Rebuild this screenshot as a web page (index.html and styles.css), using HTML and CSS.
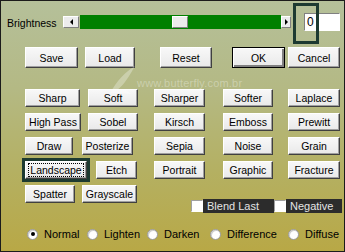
FILE: index.html
```html
<!DOCTYPE html>
<html lang="en">
<head>
	<meta charset="UTF-8">
	<title>Brightness</title>
	<link rel="stylesheet" href="styles.css">
</head>
<body>
	<div class="panel">
		<div class="bright_row">
			<span class="bright_label">Brightness</span>
			<div class="slider">
				<span class="arrow arrow_left"></span>
				<div class="track"><span class="fill_a"></span><span class="thumb"></span></div>
				<span class="arrow arrow_right"></span>
			</div>
			<div class="value_wrap">
				<input class="value" type="text" value="0">
				<span class="focus_box"></span>
			</div>
		</div>

		<div class="action_row">
			<button class="btn b_save">Save</button>
			<button class="btn b_load">Load</button>
			<button class="btn b_reset">Reset</button>
			<button class="btn b_ok">OK</button>
			<button class="btn b_cancel">Cancel</button>
		</div>

		<div class="watermark">
			<svg width="30" height="32" viewBox="0 0 30 32"><path d="M2 30 C8 22 12 12 28 2 C22 12 18 20 10 26 C16 24 20 26 24 30 C16 30 8 28 2 30 Z" fill="rgba(255,255,255,0.3)"/></svg>
			<span>www.butterfly.com.br</span>
		</div>

		<div class="filters">
			<div class="frow">
				<div class="pair"><button class="btn w55">Sharp</button><button class="btn w50 g8">Soft</button></div>
				<button class="btn c3">Sharper</button><button class="btn c4">Softer</button><button class="btn c5">Laplace</button>
			</div>
			<div class="frow">
				<div class="pair"><button class="btn w56">High Pass</button><button class="btn w50 g7">Sobel</button></div>
				<button class="btn c3">Kirsch</button><button class="btn c4">Emboss</button><button class="btn c5">Prewitt</button>
			</div>
			<div class="frow">
				<div class="pair"><button class="btn w48">Draw</button><button class="btn w51 g9">Posterize</button></div>
				<button class="btn c3">Sepia</button><button class="btn c4">Noise</button><button class="btn c5">Grain</button>
			</div>
			<div class="frow">
				<div class="pair"><button class="btn w62 focused"><span class="dots">Landscape</span></button><button class="btn w41 g9">Etch</button></div>
				<button class="btn c3">Portrait</button><button class="btn c4">Graphic</button><button class="btn c5">Fracture</button>
			</div>
			<div class="frow last_row">
				<div class="pair"><button class="btn w50">Spatter</button><button class="btn w55 g7">Grayscale</button></div>
				<div class="checks">
					<span class="check_box"></span><span class="check_label cl_blend">Blend Last</span>
					<span class="check_box"></span><span class="check_label cl_neg">Negative</span>
				</div>
			</div>
		</div>

		<div class="radio_row">
			<label class="opt"><span class="radio checked"></span>Normal</label>
			<label class="opt"><span class="radio"></span>Lighten</label>
			<label class="opt"><span class="radio"></span>Darken</label>
			<label class="opt"><span class="radio"></span>Difference</label>
			<label class="opt"><span class="radio"></span>Diffuse</label>
		</div>
	</div>
</body>
</html>
```

FILE: styles.css
```css
*{box-sizing: border-box;}
html,body{margin:0;}
body{width:345px;height:252px;overflow:hidden;font-family:"Liberation Sans",Arial,sans-serif;font-size:10.5px;color:#000;}
.panel{position:relative;height:252px;border:1px solid #1b1b1b;background:linear-gradient(#b5c09a 0%,#b4b984 35%,#b4b062 68%,#b8a846 100%);}

/* brightness slider */
.bright_row{display:flex;align-items:flex-start;height:41px;margin-top:2px;}
.bright_label{width:56px;margin:14px 0 0 6px;line-height:12px;}
.slider{display:flex;align-items:center;height:14px;margin-top:12px;}
.arrow{display:flex;align-items:center;justify-content:center;height:12px;background:#ececec;border:1px solid;border-color:#fff #808080 #808080 #fff;}
.arrow_left{width:16px;margin-right:1px;}
.arrow_right{width:10px;}
.arrow::before{content:"";border:3px solid transparent;}
.arrow_left::before{border-right-color:#000;border-left-width:0;}
.arrow_right::before{border-left-color:#000;border-right-width:0;}
.track{display:flex;align-items:center;width:201px;height:14px;background:#008000;}
.fill_a{width:92px;}
.thumb{width:16px;height:12px;background:#ebebeb;border:1px solid;border-color:#fff #808080 #808080 #fff;}
.value_wrap{position:relative;width:47px;height:41px;margin-left:2px;}
.value{display:block;width:36px;height:18px;margin:10px 0 0 11px;padding:0 2px;border:1px solid;border-color:#808080 #fff #fff #808080;background:#fff;font:inherit;font-size:12px;outline:none;}
.focus_box{position:absolute;left:0;top:0;width:26px;height:41px;border:3px solid #1d3a31;}

/* buttons */
.btn{height:100%;padding:0;font:inherit;color:#000;background:linear-gradient(#f8f8f8,#e9e9e9);border:1px solid;border-color:#fff #404040 #404040 #fff;box-shadow:inset -1px -1px #a0a0a0;}
.action_row{display:flex;height:21px;margin-top:3px;}
.b_save{width:53px;margin-left:24px;}
.b_load{width:50px;margin-left:7px;}
.b_reset{width:52px;margin-left:25px;}
.b_ok{width:53px;margin-left:20px;border-color:#000;box-shadow:inset 1px 1px #fff,inset -2px -2px #808080;}
.b_cancel{width:52px;margin-left:3px;}

.watermark{position:absolute;left:106px;top:63px;display:flex;align-items:center;gap:0;color:rgba(255,255,255,0.32);font-size:11px;letter-spacing:0.2px;}
.watermark span{margin-top:6px;}

.filters{display:flex;flex-direction:column;gap:6px;margin-top:21px;}
.frow{display:flex;height:18px;padding-left:24px;}
.pair{display:flex;width:129px;height:100%;}
.w41{width:41px;} .w48{width:48px;} .w50{width:50px;} .w51{width:51px;}
.w55{width:55px;} .w56{width:56px;} .w62{width:62px;}
.g7{margin-left:7px;} .g8{margin-left:8px;} .g9{margin-left:9px;}
.c3{width:51px;}
.c4{width:50px;margin-left:18px;}
.c5{width:52px;margin-left:15px;}
.focused{outline:3px solid #1d3a31;}
.dots{padding:0 1px;border:1px dotted #000;}

.last_row{height:28px;}
.last_row .pair{height:18px;}
.checks{display:flex;align-items:center;align-self:flex-end;height:14px;margin-left:37px;}
.check_box{width:12px;height:12px;background:#fff;border:1px solid;border-color:#a0a0a0 #fff #fff #a0a0a0;}
.check_label{height:14px;line-height:14px;padding-left:4px;background:#2c2c2c;color:#e4e4e4;font-size:11px;}
.cl_blend{width:71px;}
.cl_neg{width:56px;}

/* blend modes */
.radio_row{display:grid;grid-template-columns:60px 60px 63px 78px auto;height:12px;margin-top:15px;padding-left:26px;}
.opt{display:flex;align-items:center;gap:6px;font-size:11px;}
.radio{display:flex;align-items:center;justify-content:center;width:11px;height:11px;border-radius:50%;background:#fff;border:1px solid #9a9a9a;box-shadow:inset 1px 1px #d0d0d0;}
.checked::after{content:"";width:4px;height:4px;border-radius:50%;background:#000;}
```
